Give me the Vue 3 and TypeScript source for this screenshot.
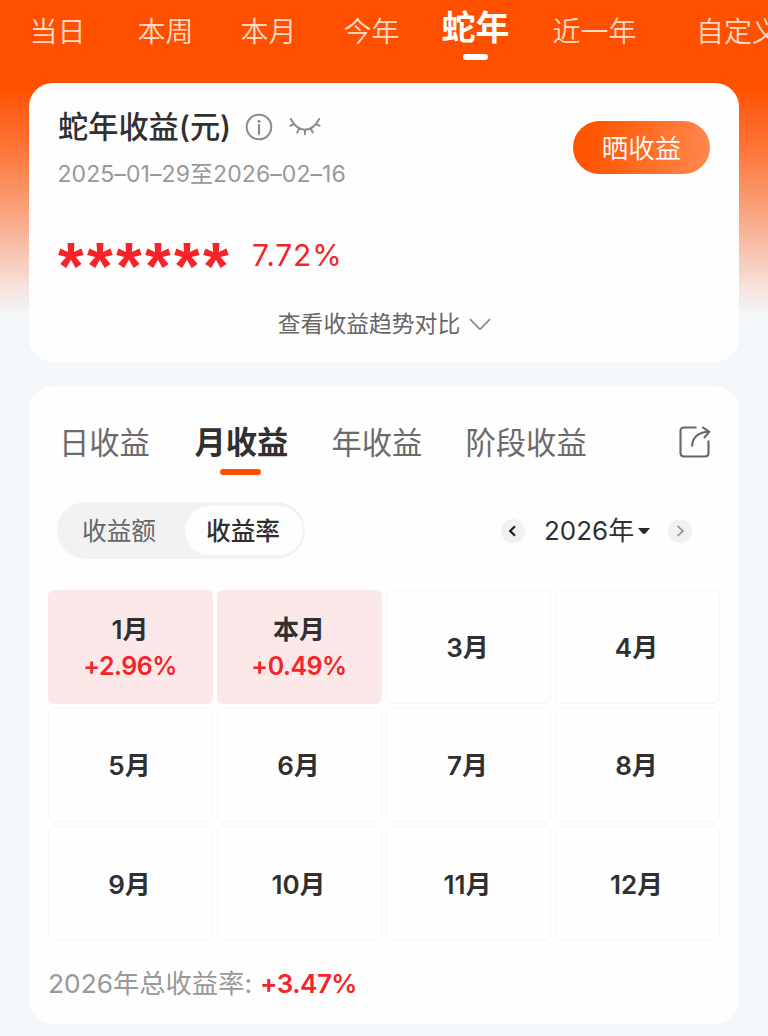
<script setup lang="ts">
import { ref } from 'vue'

interface MonthCell {
  label: string
  rate?: string
}

const periods: string[] = ['当日', '本周', '本月', '今年', '蛇年', '近一年', '自定义']
const activePeriod = ref<string>('蛇年')

const views: string[] = ['日收益', '月收益', '年收益', '阶段收益']
const activeView = ref<string>('月收益')

const modes: string[] = ['收益额', '收益率']
const activeMode = ref<string>('收益率')

const months: MonthCell[] = [
  { label: '1月', rate: '+2.96%' },
  { label: '本月', rate: '+0.49%' },
  ...[3, 4, 5, 6, 7, 8, 9, 10, 11, 12].map((m) => ({ label: `${m}月` })),
]
</script>

<template>
  <div class="page">
    <nav class="periods">
      <button
        v-for="p in periods"
        :key="p"
        class="period"
        :class="{ active: p === activePeriod }"
        @click="activePeriod = p"
      >
        <span>{{ p }}</span>
      </button>
    </nav>

    <section class="card summary">
      <div class="summary-head">
        <div>
          <div class="title-row">
            <h1>蛇年收益(元)</h1>
            <svg class="info" viewBox="0 0 28 28" fill="none">
              <circle cx="14" cy="14" r="12.3" stroke="#8c8c8c" stroke-width="2" />
              <circle cx="14" cy="8.2" r="1.5" fill="#8c8c8c" />
              <path d="M14 12v8.8" stroke="#8c8c8c" stroke-width="2.2" stroke-linecap="round" />
            </svg>
            <svg class="eye" viewBox="0 0 32 20" fill="none" stroke="#8c8c8c" stroke-width="2" stroke-linecap="round">
              <path d="M1.800 2C5.500 9 10 12.800 16 12.800S26.500 9 30.200 2" />
              <path d="M5 7 1.400 8.800M10.300 11.500 8.200 15.500M16 13v4.300M21.700 11.500l2.100 4M27 7l3.600 1.800" />
            </svg>
          </div>
          <p class="range">2025–01–29至2026–02–16</p>
        </div>
        <button class="share">晒收益</button>
      </div>
      <div class="figures">
        <span class="mask">******</span>
        <span class="rate">7.72%</span>
      </div>
      <button class="trend">
        <span>查看收益趋势对比</span>
        <svg viewBox="0 0 22 13" fill="none" stroke="#8a8a8a" stroke-width="1.700">
          <path d="M1 1.200 11 11.300 21 1.200" />
        </svg>
      </button>
    </section>

    <section class="card detail">
      <div class="views">
        <button
          v-for="v in views"
          :key="v"
          class="view"
          :class="{ active: v === activeView }"
          @click="activeView = v"
        >
          {{ v }}
        </button>
        <svg class="export" viewBox="0 0 32 32" fill="none" stroke="#666" stroke-width="2.100">
          <path d="M17.500 1.500H5Q1.500 1.500 1.500 5V27Q1.500 30.500 5 30.500H26Q29.500 30.500 29.500 27V14.500" />
          <path d="M13 20.500C13.500 12 18 6.200 30 5.800M23.200 1 30.200 5.800 25 12" />
        </svg>
      </div>

      <div class="controls">
        <div class="toggle">
          <button
            v-for="m in modes"
            :key="m"
            :class="{ on: m === activeMode }"
            @click="activeMode = m"
          >
            {{ m }}
          </button>
        </div>
        <div class="year">
          <button class="step">
            <svg viewBox="0 0 24 24" fill="none" stroke="#222" stroke-width="2.200"><path d="M14 7.200 9.200 12l4.800 4.800" /></svg>
          </button>
          <span class="year-text">2026年</span>
          <svg class="caret" viewBox="0 0 14 8"><path d="M1 1H13L8.600 6.300Q7 7.800 5.400 6.300Z" fill="#2b2b2b" /></svg>
          <button class="step">
            <svg viewBox="0 0 24 24" fill="none" stroke="#999" stroke-width="1.800"><path d="M9.500 6.800 15 12l-5.500 5.200" /></svg>
          </button>
        </div>
      </div>

      <div class="months">
        <div v-for="c in months" :key="c.label" class="cell" :class="{ gain: c.rate }">
          <span class="month">{{ c.label }}</span>
          <span v-if="c.rate" class="cell-rate">{{ c.rate }}</span>
        </div>
      </div>

      <p class="total">
        <span>2026年总收益率:</span>
        <strong>+3.47%</strong>
      </p>
    </section>
  </div>
</template>

<style>
body {
  margin: 0;
  overflow: hidden;
  background: #f3f7f9;
}
</style>

<style scoped>
.page {
  box-sizing: border-box;
  width: 768px;
  height: 1036px;
  overflow: hidden;
  font-family: Inter, 'Noto Sans CJK SC', sans-serif;
  color: #303030;
  background: linear-gradient(
      180deg,
      #ff5000 0,
      #ff5000 84px,
      #ff6f30 140px,
      #fa9a70 200px,
      #f8c3ae 250px,
      #f5e4df 290px,
      #f3f7f9 314px
    )
    #f3f7f9;
}

button {
  padding: 0;
  border: 0;
  background: none;
  font: inherit;
  color: inherit;
  white-space: nowrap;
}

h1,
p {
  margin: 0;
}

svg {
  display: block;
  flex: none;
}

.periods {
  display: grid;
  grid-template-columns: 108px 103px 103px 98px 111px 143.500px 84px;
  height: 82.5px;
  padding-left: 29.5px;
}

.period {
  display: flex;
  flex-direction: column;
  align-items: flex-start;
  height: 64px;
  font-size: 28px;
  font-weight: 350;
  line-height: 64px;
  color: #ffd9c7;
}

.period.active {
  font-size: 34px;
  font-weight: 700;
  line-height: 54px;
  color: #fff;
}

.period.active span {
  height: 54px;
  line-height: 56px;
}

.period.active::after {
  content: '';
  width: 25px;
  height: 6px;
  margin-left: 21.5px;
  border-radius: 3px;
  background: #fff;
}

.card {
  box-sizing: border-box;
  width: 710px;
  margin-left: 29px;
  border-radius: 24px;
  background: #fefefe;
}

.summary {
  display: flex;
  flex-direction: column;
  height: 279.5px;
  padding: 24.5px 29px 0;
}

.summary-head {
  display: flex;
  justify-content: space-between;
}

.title-row {
  display: flex;
  align-items: center;
  height: 40px;
}

h1 {
  width: 187px;
  font-size: 30.200px;
  font-weight: 500;
  line-height: 42px;
  white-space: nowrap;
}

.info {
  width: 28px;
  height: 28px;
}

.eye {
  width: 32px;
  height: 20px;
  margin-left: 16px;
}

.range {
  margin: 12px 0 0 -0.500px;
  font-size: 23px;
  font-weight: 390;
  line-height: 30px;
  letter-spacing: 0.080px;
  color: #999;
}

.share {
  width: 137px;
  height: 53px;
  margin-top: 14px;
  border-radius: 27px;
  background: linear-gradient(100deg, #ff5500 15%, #ff8a52 100%);
  font-size: 26.5px;
  font-weight: 350;
  line-height: 54px;
  color: #fff;
}

.figures {
  display: flex;
  align-items: center;
  height: 40px;
  margin-top: 46px;
  color: #f62328;
}

.mask {
  width: 194px;
  height: 40px;
  font-family: 'Liberation Sans', Arial, sans-serif;
  font-size: 66px;
  font-weight: 700;
  line-height: 62px;
  letter-spacing: 3.300px;
  white-space: nowrap;
}

.rate {
  font-size: 30px;
  line-height: 40px;
  letter-spacing: 0.900px;
}

.trend {
  display: flex;
  align-items: center;
  align-self: center;
  gap: 9px;
  height: 34px;
  margin-top: 32px;
  padding-left: 1px;
  font-size: 22.8px;
  line-height: 34px;
  color: #666;
}

.trend svg {
  width: 22px;
  height: 13px;
}

.detail {
  height: 638px;
  margin-top: 24px;
  padding: 32px 19px 0;
}

.views {
  display: grid;
  grid-template-columns: 135.500px 137px 134px 213.500px 32px;
  height: 58px;
  padding-left: 11px;
}

.view {
  display: flex;
  flex-direction: column;
  align-items: flex-start;
  height: 58px;
  font-size: 30.3px;
  line-height: 51px;
  color: #6b6b6b;
}

.view.active {
  font-size: 31.3px;
  font-weight: 700;
  color: #303030;
}

.view.active::after {
  content: '';
  width: 41px;
  height: 6.500px;
  margin: -0.500px 0 0 25.500px;
  border-radius: 3px;
  background: #ff5000;
}

.export {
  width: 32px;
  height: 32px;
  margin-top: 8px;
}

.controls {
  display: flex;
  align-items: center;
  justify-content: space-between;
  height: 57px;
  margin-top: 26px;
  padding: 0 28px 0 9px;
}

.toggle {
  box-sizing: border-box;
  display: flex;
  width: 248px;
  height: 57px;
  padding: 4px 2px;
  border-radius: 29px;
  background: #f2f2f5;
}

.toggle button {
  box-sizing: border-box;
  width: 118px;
  padding: 2px 2px 0 0;
  border-radius: 25px;
  font-size: 24.700px;
  line-height: 47px;
  color: #666;
}

.toggle button:first-child {
  width: 126px;
  padding-right: 6px;
}

.toggle button.on {
  background: #fefefe;
  font-weight: 500;
  color: #303030;
}

.year {
  display: flex;
  align-items: center;
}

.step {
  width: 24px;
  height: 24px;
  border-radius: 50%;
  background: #f1f1f4;
}

.year-text {
  width: 93px;
  margin-left: 19px;
  font-size: 26px;
  line-height: 40px;
  white-space: nowrap;
}

.caret {
  width: 14px;
  height: 8px;
  margin-right: 17px;
}

.months {
  display: grid;
  grid-template-columns: repeat(4, 165px);
  grid-auto-rows: 114.200px;
  gap: 4.300px 4px;
  margin-top: 30.500px;
}

.cell {
  box-sizing: border-box;
  display: flex;
  flex-direction: column;
  align-items: center;
  justify-content: center;
  padding: 1.500px 2px 0 0;
  border: 1.500px solid #f5f5f6;
  border-radius: 6px;
}

.cell.gain {
  padding: 3px 1px 0 0;
  border-color: #fce8e8;
  background: #fce8e8;
}

.month {
  font-size: 26px;
  font-weight: 600;
  line-height: 37px;
}

.cell-rate {
  font-size: 25px;
  font-weight: 600;
  line-height: 37px;
  letter-spacing: -0.500px;
  color: #f62328;
}

.total {
  display: flex;
  height: 40px;
  margin-top: 23px;
  font-size: 26.300px;
  line-height: 39px;
  color: #999;
}

.total span {
  width: 212px;
  font-weight: 390;
  white-space: nowrap;
}

.total strong {
  font-weight: 600;
  font-size: 26px;
  letter-spacing: -0.500px;
  color: #f62328;
}
</style>
